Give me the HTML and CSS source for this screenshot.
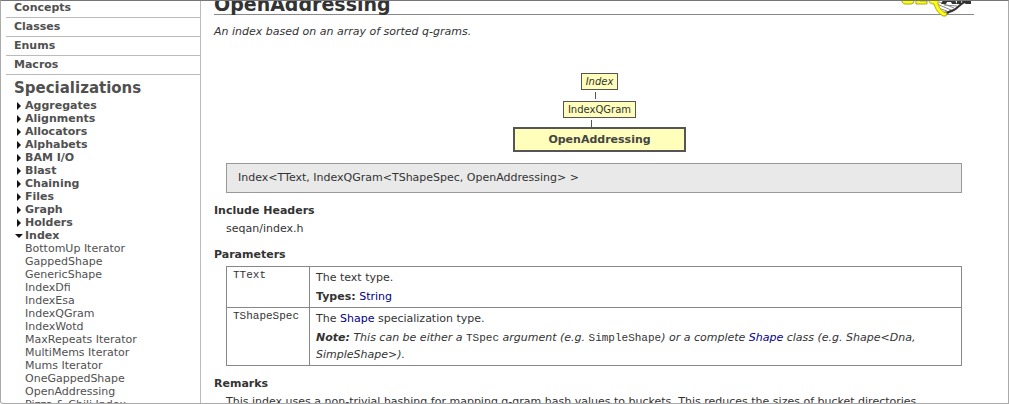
FILE: index.html
```
<!DOCTYPE html>
<html lang="en">
<head>
<meta charset="utf-8">
<title>OpenAddressing</title>
<link rel="stylesheet" href="styles.css">
</head>
<body>
<div class="frame">
  <nav class="sidebar">
    <ul class="sections">
      <li><a href="#concepts">Concepts</a></li>
      <li><a href="#classes">Classes</a></li>
      <li><a href="#enums">Enums</a></li>
      <li><a href="#macros">Macros</a></li>
    </ul>
    <h2 class="group-title">Specializations</h2>
    <ul class="tree">
      <li><a class="node" href="#aggregates">Aggregates</a></li>
      <li><a class="node" href="#alignments">Alignments</a></li>
      <li><a class="node" href="#allocators">Allocators</a></li>
      <li><a class="node" href="#alphabets">Alphabets</a></li>
      <li><a class="node" href="#bam">BAM I/O</a></li>
      <li><a class="node" href="#blast">Blast</a></li>
      <li><a class="node" href="#chaining">Chaining</a></li>
      <li><a class="node" href="#files">Files</a></li>
      <li><a class="node" href="#graph">Graph</a></li>
      <li><a class="node" href="#holders">Holders</a></li>
      <li><a class="node open" href="#index">Index</a>
        <ul class="leaves">
          <li><a href="#bottomup">BottomUp Iterator</a></li>
          <li><a href="#gapped">GappedShape</a></li>
          <li><a href="#generic">GenericShape</a></li>
          <li><a href="#dfi">IndexDfi</a></li>
          <li><a href="#esa">IndexEsa</a></li>
          <li><a href="#qgram">IndexQGram</a></li>
          <li><a href="#wotd">IndexWotd</a></li>
          <li><a href="#maxrepeats">MaxRepeats Iterator</a></li>
          <li><a href="#multimems">MultiMems Iterator</a></li>
          <li><a href="#mums">Mums Iterator</a></li>
          <li><a href="#onegapped">OneGappedShape</a></li>
          <li><a href="#open">OpenAddressing</a></li>
          <li><a href="#pizza">Pizza &amp; Chili Index</a></li>
        </ul>
      </li>
    </ul>
  </nav>
  <main class="content">
    <header class="title-bar">
      <h1>OpenAddressing</h1>
      <svg class="logo" width="72" height="28" viewBox="0 0 72 28" aria-label="SeqAn" role="img">
        <g fill="none" stroke="#888" stroke-width="1">
          <path d="M35 15l14 6M37 13l15 6M42 16l13 1M36 19l9 3"/>
        </g>
        <path d="M41 24c8 0 12-3 16-7s6-5 10-5" fill="none" stroke="#333" stroke-width="2"/>
        <path d="M42 24l9-4-5 5z" fill="#333"/>
        <path d="M41 11l-2 4h5l1-2h4l1 2h5l-2-4zM55 11v4h4v-3l5 3h5v-4z" fill="#333"/>
        <path d="M0 11v2q1 2 3 2h6q3 0 3-3v-1M14 11v4h11v-3h-7v-1M27 11q0 4 5 4c2 6 4 9 9 12l3 0 1-3c-5-1-7-4-9-9v-4" fill="#ff0" stroke="#a5a530" stroke-width="1"/>
      </svg>
    </header>
    <p class="summary">An index based on an array of sorted q-grams.</p>
    <div class="diagram">
      <a class="box" href="#index"><i>Index</i></a>
      <span class="link upper"></span>
      <a class="box" href="#qgram">IndexQGram</a>
      <span class="link lower"></span>
      <strong class="box current">OpenAddressing</strong>
    </div>
    <div class="signature">Index&lt;TText, IndexQGram&lt;TShapeSpec, OpenAddressing&gt; &gt;</div>
    <h3>Include Headers</h3>
    <p class="text">seqan/index.h</p>
    <h3>Parameters</h3>
    <table class="params">
      <tr>
        <th scope="row">TText</th>
        <td><p>The text type.</p><p><b>Types:</b> <a href="#string">String</a></p></td>
      </tr>
      <tr>
        <th scope="row">TShapeSpec</th>
        <td><p>The <a href="#shape">Shape</a> specialization type.</p><p class="note"><b>Note:</b> This can be either a <code>TSpec</code> argument (e.g. <code>SimpleShape</code>) or a complete <a href="#shape">Shape</a> class (e.g. Shape&lt;Dna, SimpleShape&gt;).</p></td>
      </tr>
    </table>
    <h3>Remarks</h3>
    <p class="text">This index uses a non-trivial hashing for mapping q-gram hash values to buckets. This reduces the sizes of bucket directories</p>
  </main>
</div>
</body>
</html>
```

FILE: styles.css
```
* { box-sizing: border-box; }
body {
  margin: 0;
  background: #fff;
  color: #333;
  font: 11px/17px Verdana, "DejaVu Sans", sans-serif;
}
h1, h2, h3, p, ul { margin: 0; padding: 0; }
ul { list-style: none; }
a { color: #008; text-decoration: none; }

.frame {
  display: flex;
  height: 100vh;
  overflow: hidden;
  border: 1px solid #aaa;
  border-top-color: #777;
  border-bottom-left-radius: 3px;
}

.sidebar {
  flex: 0 0 200px;
  padding-left: 5px;
  border-right: 1px solid #bbb;
}
.sidebar a { color: #505050; }
.sections { margin-top: -2px; font-weight: bold; }
.sections li {
  height: 19px;
  padding-left: 8px;
  border-bottom: 1px solid #bbb;
}
.group-title {
  padding: 3px 0 1px 8px;
  color: #505050;
  font-size: 15px;
  line-height: 20px;
}
.tree { padding-left: 9px; line-height: 13px; }
.node { display: flex; align-items: center; font-weight: bold; }
.node::before {
  content: "";
  flex: none;
  width: 0;
  margin: 0 4px 0 2px;
  border: solid transparent;
  border-width: 4px 0 4px 4px;
  border-left-color: #111;
}
.node.open::before {
  margin: 0 2px 0 0;
  border-width: 4px 4px 0;
  border-color: #111 transparent transparent;
}
.leaves { padding-left: 10px; }

.content { flex: 1; min-width: 0; padding: 0 34px 0 13px; }
.title-bar {
  display: flex;
  justify-content: space-between;
  height: 26px;
  margin-top: -12px;
  border-bottom: 1px solid #888;
}
h1 { font-size: 19px; line-height: 30px; }
.logo { flex: none; overflow: visible; }
.summary { padding-top: 8px; font-style: italic; }

.diagram {
  display: flex;
  flex-direction: column;
  align-items: center;
  padding: 33px 0 11px 11px;
}
.box {
  padding: 0 4px;
  border: 1px solid #555;
  background: #ffb;
  color: #333;
  font-size: 10px;
  line-height: 15px;
}
.box.current {
  padding: 0 33px;
  border-width: 2px;
  color: #444;
  font-size: 11px;
  line-height: 21px;
}
.link { width: 1px; height: 7px; background: #555; }
.link.upper { margin: 2px 8px 2px 0; }
.link.lower { margin: 2px 16px 0 0; }

.signature {
  margin: 0 12px 9px;
  padding: 6px 11px;
  border: 1px solid #999;
  background: #e9e9e9;
  line-height: 16px;
}
h3 { font-size: 11px; line-height: 18px; }
.text { margin: 0 0 9px 12px; }
.params {
  width: calc(100% - 24px);
  margin: 2px 12px 9px;
  border-collapse: collapse;
}
.params th, .params td {
  padding: 2px 6px;
  border: 1px solid #888;
  text-align: left;
  vertical-align: top;
}
.params th, code { font: 11px/12px "Liberation Mono", monospace; }
.params th { width: 83px; }
.params p + p { margin-top: 2px; }
.note { font-style: italic; }
```
